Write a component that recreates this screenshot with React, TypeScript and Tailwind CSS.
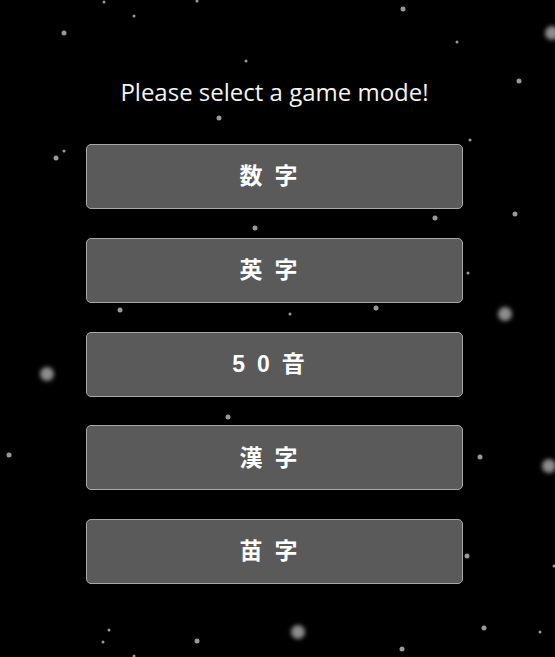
import React from 'react';

type Star = { x: number; y: number; size: 's' | 'm' | 'l' };

const STARS: Star[] = [
  { x: 104, y: 2, size: 's' },
  { x: 197, y: 1, size: 's' },
  { x: 134, y: 16, size: 's' },
  { x: 64, y: 33, size: 'm' },
  { x: 403, y: 9, size: 'm' },
  { x: 457, y: 42, size: 's' },
  { x: 552, y: 33, size: 'l' },
  { x: 246, y: 61, size: 's' },
  { x: 519, y: 81, size: 'm' },
  { x: 219, y: 118, size: 'm' },
  { x: 470, y: 140, size: 's' },
  { x: 56, y: 158, size: 'm' },
  { x: 64, y: 151, size: 's' },
  { x: 435, y: 218, size: 'm' },
  { x: 515, y: 214, size: 'm' },
  { x: 255, y: 228, size: 'm' },
  { x: 468, y: 273, size: 's' },
  { x: 120, y: 310, size: 'm' },
  { x: 290, y: 314, size: 's' },
  { x: 376, y: 308, size: 'm' },
  { x: 505, y: 314, size: 'l' },
  { x: 47, y: 374, size: 'l' },
  { x: 228, y: 417, size: 'm' },
  { x: 9, y: 455, size: 'm' },
  { x: 480, y: 457, size: 'm' },
  { x: 549, y: 466, size: 'l' },
  { x: 467, y: 556, size: 'm' },
  { x: 554, y: 566, size: 's' },
  { x: 298, y: 632, size: 'l' },
  { x: 109, y: 630, size: 's' },
  { x: 103, y: 642, size: 's' },
  { x: 197, y: 641, size: 'm' },
  { x: 134, y: 656, size: 's' },
  { x: 402, y: 649, size: 'm' },
  { x: 484, y: 628, size: 'm' },
  { x: 540, y: 632, size: 's' },
];

const SIZE_CLASS: Record<Star['size'], string> = {
  s: 'w-[3px] h-[3px] bg-white/60',
  m: 'w-[5px] h-[5px] bg-white/60 blur-[0.5px]',
  l: 'w-[14px] h-[14px] bg-white/55 blur-[2px]',
};

const MODES = ['数字', '英字', '50音', '漢字', '苗字'];

const StarField: React.FC = () => (
  <div className="absolute inset-0 pointer-events-none">
    {STARS.map((s, i) => (
      <span
        key={i}
        className={`absolute rounded-full -translate-x-1/2 -translate-y-1/2 ${SIZE_CLASS[s.size]}`}
        style={{ left: s.x, top: s.y }}
      />
    ))}
  </div>
);

export default function App() {
  return (
    <div className="relative w-full min-h-screen h-[657px] bg-black overflow-hidden">
      <StarField />
      <main className="relative flex flex-col items-center pt-[76px] pr-[6px]">
        <h1 className="text-[24px] leading-[32px] text-[#f4f4f0] font-['Open_Sans','Noto_Sans',sans-serif] font-normal">
          Please select a game mode!
        </h1>
        <div className="mt-[36px] w-[377px] flex flex-col gap-[28.75px]">
          {MODES.map(m => (
            <button
              key={m}
              className="h-[65px] w-full rounded-[5px] border border-[#a8a8a8] bg-[#5a5a5a] text-white text-[23px] font-bold tracking-[12px] font-['Liberation_Sans','Noto_Sans_CJK_JP',sans-serif]"
            >
              {m}
            </button>
          ))}
        </div>
      </main>
    </div>
  );
}
